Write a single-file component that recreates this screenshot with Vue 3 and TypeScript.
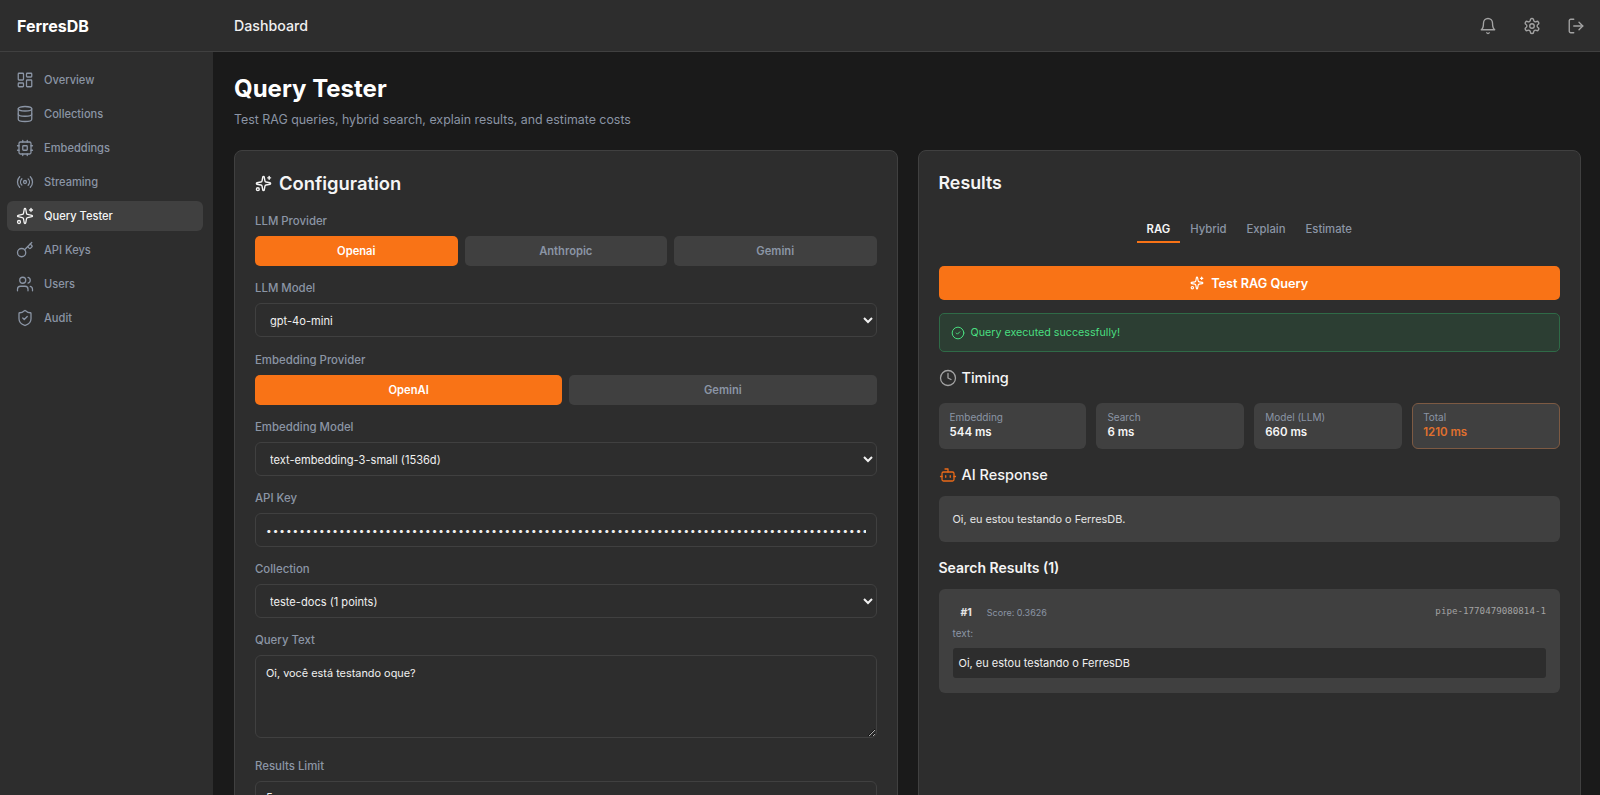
<script setup lang="ts">
const icons: Record<string, string> = {
  dash: '<rect width="7" height="9" x="3" y="3" rx="1"/><rect width="7" height="5" x="14" y="3" rx="1"/><rect width="7" height="9" x="14" y="12" rx="1"/><rect width="7" height="5" x="3" y="16" rx="1"/>',
  db: '<ellipse cx="12" cy="5" rx="9" ry="3"/><path d="M3 5V19A9 3 0 0 0 21 19V5"/><path d="M3 12A9 3 0 0 0 21 12"/>',
  cpu: '<rect width="16" height="16" x="4" y="4" rx="2"/><rect width="6" height="6" x="9" y="9" rx="1"/><path d="M15 2v2M15 20v2M2 15h2M2 9h2M20 15h2M20 9h2M9 2v2M9 20v2"/>',
  radio: '<path d="M4.9 19.1C1 15.2 1 8.8 4.9 4.9"/><path d="M7.8 16.2c-2.3-2.3-2.3-6.1 0-8.5"/><circle cx="12" cy="12" r="2"/><path d="M16.2 7.8c2.3 2.3 2.3 6.1 0 8.5"/><path d="M19.1 4.9C23 8.8 23 15.1 19.1 19"/>',
  sparkles: '<path d="M11.017 2.814a1 1 0 0 1 1.966 0l1.051 5.558a2 2 0 0 0 1.594 1.594l5.558 1.051a1 1 0 0 1 0 1.966l-5.558 1.051a2 2 0 0 0-1.594 1.594l-1.051 5.558a1 1 0 0 1-1.966 0l-1.051-5.558a2 2 0 0 0-1.594-1.594l-5.558-1.051a1 1 0 0 1 0-1.966l5.558-1.051a2 2 0 0 0 1.594-1.594z"/><path d="M20 2v4"/><path d="M22 4h-4"/><circle cx="4" cy="20" r="2"/>',
  key: '<path d="m15.5 7.5 2.3 2.3a1 1 0 0 0 1.4 0l2.1-2.1a1 1 0 0 0 0-1.4L19 4"/><path d="m21 2-9.6 9.6"/><circle cx="7.5" cy="15.5" r="5.5"/>',
  users: '<path d="M16 21v-2a4 4 0 0 0-4-4H6a4 4 0 0 0-4 4v2"/><circle cx="9" cy="7" r="4"/><path d="M22 21v-2a4 4 0 0 0-3-3.87"/><path d="M16 3.13a4 4 0 0 1 0 7.75"/>',
  shield: '<path d="M20 13c0 5-3.5 7.5-7.66 8.95a1 1 0 0 1-.67-.01C7.5 20.5 4 18 4 13V6a1 1 0 0 1 1-1c2 0 4.5-1.2 6.24-2.72a1.17 1.17 0 0 1 1.52 0C14.51 3.81 17 5 19 5a1 1 0 0 1 1 1z"/><path d="m9 12 2 2 4-4"/>',
  bell: '<path d="M6 8a6 6 0 0 1 12 0c0 7 3 9 3 9H3s3-2 3-9"/><path d="M10.3 21a1.94 1.94 0 0 0 3.4 0"/>',
  gear: '<path d="M12.22 2h-.44a2 2 0 0 0-2 2v.18a2 2 0 0 1-1 1.73l-.43.25a2 2 0 0 1-2 0l-.15-.08a2 2 0 0 0-2.73.73l-.22.38a2 2 0 0 0 .73 2.73l.15.1a2 2 0 0 1 1 1.72v.51a2 2 0 0 1-1 1.74l-.15.09a2 2 0 0 0-.73 2.73l.22.38a2 2 0 0 0 2.73.73l.15-.08a2 2 0 0 1 2 0l.43.25a2 2 0 0 1 1 1.73V20a2 2 0 0 0 2 2h.44a2 2 0 0 0 2-2v-.18a2 2 0 0 1 1-1.73l.43-.25a2 2 0 0 1 2 0l.15.08a2 2 0 0 0 2.73-.73l.22-.39a2 2 0 0 0-.73-2.73l-.15-.08a2 2 0 0 1-1-1.74v-.5a2 2 0 0 1 1-1.74l.15-.09a2 2 0 0 0 .73-2.73l-.22-.38a2 2 0 0 0-2.73-.73l-.15.08a2 2 0 0 1-2 0l-.43-.25a2 2 0 0 1-1-1.73V4a2 2 0 0 0-2-2z"/><circle cx="12" cy="12" r="3"/>',
  logout: '<path d="M9 21H5a2 2 0 0 1-2-2V5a2 2 0 0 1 2-2h4"/><path d="m16 17 5-5-5-5"/><path d="M21 12H9"/>',
  clock: '<circle cx="12" cy="12" r="10"/><path d="M12 6v6l4 2"/>',
  bot: '<path d="M12 8V4H8"/><rect width="16" height="12" x="4" y="8" rx="2"/><path d="M2 14h2"/><path d="M20 14h2"/><path d="M15 13v2"/><path d="M9 13v2"/>',
  check: '<circle cx="12" cy="12" r="10"/><path d="m9 12 2 2 4-4"/>',
}

const nav = [
  { label: 'Overview', icon: 'dash' },
  { label: 'Collections', icon: 'db' },
  { label: 'Embeddings', icon: 'cpu' },
  { label: 'Streaming', icon: 'radio' },
  { label: 'Query Tester', icon: 'sparkles', active: true },
  { label: 'API Keys', icon: 'key' },
  { label: 'Users', icon: 'users' },
  { label: 'Audit', icon: 'shield' },
]
const apiKey = 'x'.repeat(164)
const timing = [
  { label: 'Embedding', value: '544 ms' },
  { label: 'Search', value: '6 ms' },
  { label: 'Model (LLM)', value: '660 ms' },
  { label: 'Total', value: '1210 ms', total: true },
]
</script>

<template>
  <div class="app">
    <header class="topbar">
      <div class="brand">FerresDB</div>
      <div class="crumb">Dashboard</div>
      <div class="top-actions">
        <svg class="ic top-ic" viewBox="0 0 24 24" v-html="icons.bell"></svg>
        <svg class="ic top-ic" viewBox="0 0 24 24" v-html="icons.gear"></svg>
        <svg class="ic top-ic" viewBox="0 0 24 24" v-html="icons.logout"></svg>
      </div>
    </header>
    <div class="body">
      <aside class="sidebar">
        <a v-for="n in nav" :key="n.label" class="nav-item" :class="{ active: n.active }">
          <svg class="ic nav-ic" viewBox="0 0 24 24" v-html="icons[n.icon]"></svg>
          <span>{{ n.label }}</span>
        </a>
      </aside>
      <main class="main">
        <h1 class="title">Query Tester</h1>
        <p class="subtitle">Test RAG queries, hybrid search, explain results, and estimate costs</p>
        <div class="columns">
          <section class="card">
            <h2 class="card-title">
              <svg class="ic head-ic" viewBox="0 0 24 24" v-html="icons.sparkles"></svg>
              Configuration
            </h2>
            <div class="form">
              <div class="field">
                <label>LLM Provider</label>
                <div class="seg">
                  <button class="seg-btn on">Openai</button>
                  <button class="seg-btn">Anthropic</button>
                  <button class="seg-btn">Gemini</button>
                </div>
              </div>
              <div class="field">
                <label>LLM Model</label>
                <select class="ctl sel"><option>gpt-4o-mini</option></select>
              </div>
              <div class="field embed">
                <label>Embedding Provider</label>
                <div class="seg">
                  <button class="seg-btn on">OpenAI</button>
                  <button class="seg-btn">Gemini</button>
                </div>
              </div>
              <div class="field">
                <label>Embedding Model</label>
                <select class="ctl sel"><option>text-embedding-3-small (1536d)</option></select>
              </div>
              <div class="field">
                <label>API Key</label>
                <input class="ctl pw" type="password" :value="apiKey" />
              </div>
              <div class="field">
                <label>Collection</label>
                <select class="ctl sel"><option>teste-docs (1 points)</option></select>
              </div>
              <div class="field">
                <label>Query Text</label>
                <textarea class="ctl area">Oi, você está testando oque?</textarea>
              </div>
              <div class="field limit">
                <label>Results Limit</label>
                <input class="ctl" type="number" value="5" />
              </div>
            </div>
          </section>

          <section class="card">
            <h2 class="card-title results">Results</h2>
            <div class="tabs">
              <span class="tab on">RAG</span>
              <span class="tab">Hybrid</span>
              <span class="tab">Explain</span>
              <span class="tab">Estimate</span>
            </div>
            <button class="run">
              <svg class="ic run-ic" viewBox="0 0 24 24" v-html="icons.sparkles"></svg>
              Test RAG Query
            </button>
            <div class="alert">
              <svg class="ic alert-ic" viewBox="0 0 24 24" v-html="icons.check"></svg>
              Query executed successfully!
            </div>
            <h3 class="sec"><svg class="ic sec-ic" viewBox="0 0 24 24" v-html="icons.clock"></svg>Timing</h3>
            <div class="tiles">
              <div v-for="t in timing" :key="t.label" class="tile" :class="{ total: t.total }">
                <div class="tile-label">{{ t.label }}</div>
                <div class="tile-value">{{ t.value }}</div>
              </div>
            </div>
            <h3 class="sec ai"><svg class="ic sec-ic bot" viewBox="0 0 24 24" v-html="icons.bot"></svg>AI Response</h3>
            <div class="answer">Oi, eu estou testando o FerresDB.</div>
            <h3 class="sec found">Search Results (1)</h3>
            <div class="hit">
              <div class="hit-head">
                <span class="rank">#1</span>
                <span class="score">Score: 0.3626</span>
                <span class="pid">pipe-1770479080814-1</span>
              </div>
              <div class="hit-key">text:</div>
              <div class="hit-text">Oi, eu estou testando o FerresDB</div>
            </div>
          </section>
        </div>
      </main>
    </div>
  </div>
</template>

<style>
html, body { margin: 0; background: #1a1a1a; overflow: hidden; }
</style>

<style scoped>
* { box-sizing: border-box; }
.app { height: 795px; overflow: hidden; display: flex; flex-direction: column; font-family: Inter, "Noto Sans", sans-serif; color: #f5f5f5; background: #1a1a1a; }
.ic { fill: none; stroke: currentColor; stroke-width: 2; stroke-linecap: round; stroke-linejoin: round; flex: none; }
.topbar { height: 52px; flex: none; display: flex; align-items: center; background: #2d2d2d; border-bottom: 1px solid #404040; }
.brand { width: 234px; padding-left: 17px; font-size: 16px; font-weight: 700; color: #fff; }
.crumb { font-size: 14.2px; font-weight: 500; color: #f0f0f0; }
.top-actions { margin-left: auto; display: flex; gap: 26px; padding-right: 15px; color: #a3a3a3; }
.top-ic { width: 18px; height: 18px; stroke-width: 1.8; }
.body { flex: 1; display: flex; min-height: 0; }
.sidebar { width: 213px; flex: none; background: #2d2d2d; padding: 13px 10px 0 7px; display: flex; flex-direction: column; gap: 4px; }
.nav-item { height: 30px; display: flex; align-items: center; gap: 10px; padding-left: 9px; border-radius: 6px; font-size: 11.1px; font-weight: 500; color: #8b95a5; }
.nav-item.active { background: #404040; color: #f5f5f5; }
.nav-ic { width: 18px; height: 18px; stroke-width: 1.7; }
.main { flex: 1; min-width: 0; padding: 21px 19px 0 21px; overflow: hidden; }
.title { margin: 0; font-size: 24px; line-height: 32px; font-weight: 700; color: #fff; }
.subtitle { margin: 5px 0 0; font-size: 12.4px; line-height: 20px; color: #8b95a5; }
.columns { display: flex; gap: 20px; margin-top: 20px; align-items: stretch; }
.card { flex: 1; min-width: 0; background: #2d2d2d; border: 1px solid #404040; border-radius: 8px; padding: 20px; }
.card-title { margin: 0 0 17px; display: flex; align-items: center; gap: 7px; font-size: 18.4px; line-height: 24px; font-weight: 600; color: #f5f5f5; }
.card-title.results { font-size: 17.8px; }
.head-ic { width: 17px; height: 17px; }
.form { display: flex; flex-direction: column; gap: 14px; padding-top: 1px; }
.field label { display: block; height: 16px; margin-bottom: 7px; font-size: 11.4px; line-height: 16px; font-weight: 500; color: #8b95a5; }
.embed { margin-top: 1px; }
.seg { display: flex; gap: 7px; }
.seg-btn { flex: 1; height: 30px; border: 0; border-radius: 5px; background: #404040; color: #8b95a5; font: 600 11.2px Inter, sans-serif; }
.seg-btn.on { background: #f97316; color: #fff; }
.ctl { display: block; width: 100%; height: 34px; background: #2d2d2d; border: 1px solid #404040; border-radius: 6px; color: #f0f0f0; font: 400 11.1px Inter, sans-serif; padding: 0 10px; outline: none; color-scheme: dark; }
.sel { padding-top: 2px; }
.pw { font-size: 10px; letter-spacing: 1px; }
.area { height: 83px; padding: 10px; resize: vertical; font-size: 10.9px; }
.limit { margin-top: 6px; }
.tabs { display: flex; justify-content: center; height: 47px; margin-top: 24px; align-items: flex-start; }
.tab { font-size: 11.3px; font-weight: 500; color: #8b95a5; padding: 0 10px; height: 24px; line-height: 20px; }
.tab.on { color: #f5f5f5; font-weight: 600; border-bottom: 2px solid #f97316; }
.run { width: 100%; height: 34px; border: 0; border-radius: 5px; background: #f97316; color: #fff; font: 600 12.7px Inter, sans-serif; display: flex; align-items: center; justify-content: center; gap: 7px; }
.run-ic { width: 14px; height: 14px; }
.alert { margin-top: 13px; height: 39px; border: 1px solid #2f6a47; border-radius: 5px; background: #2c3e33; color: #4ade80; font-size: 10.7px; display: flex; align-items: center; gap: 6px; padding-left: 11px; }
.alert-ic { width: 14px; height: 14px; stroke-width: 1.7; }
.sec { margin: 0; display: flex; align-items: center; gap: 5px; font-size: 14.5px; line-height: 20px; font-weight: 500; color: #f5f5f5; }
.alert + .sec { margin-top: 16px; }
.sec-ic { width: 18px; height: 18px; color: #a3a3a3; stroke-width: 1.7; }
.sec-ic.bot { color: #ea6a18; }
.tiles { margin-top: 15px; display: grid; grid-template-columns: repeat(4, 1fr); gap: 10px; }
.tile { height: 46px; border-radius: 6px; background: #404040; padding: 8px 11px; }
.tile.total { border: 1px solid #7d5a43; padding: 7px 10px; }
.tile-label { font-size: 10px; line-height: 13px; color: #8b95a5; }
.tile-value { margin-top: 1px; font-size: 11.5px; line-height: 15px; font-weight: 600; color: #f5f5f5; }
.total .tile-value { color: #e0702e; }
.ai { margin-top: 16px; }
.answer { margin-top: 11px; height: 46px; border-radius: 6px; background: #404040; padding: 0 14px; font-size: 10.9px; line-height: 46px; color: #e5e5e5; }
.found { margin-top: 16px; font-weight: 600; font-size: 14px; }
.hit { margin-top: 11px; height: 104px; border-radius: 6px; background: #404040; padding: 13px 14px; }
.hit-head { display: flex; align-items: center; height: 20px; }
.rank { margin-left: 8px; font-size: 10.5px; font-weight: 700; color: #e5e5e5; }
.score { margin-left: 15px; font-size: 9px; color: #8b95a5; }
.pid { margin-left: auto; font-family: "DejaVu Sans Mono", "Liberation Mono", monospace; font-size: 9.2px; color: #a3a3a3; position: relative; top: -2px; }
.hit-key { margin-top: 5px; font-size: 10px; line-height: 13px; color: #8b95a5; }
.hit-text { margin-top: 8px; height: 30px; border-radius: 3px; background: #2d2d2d; padding: 0 6px; font-size: 11px; line-height: 30px; color: #f0f0f0; }
</style>
